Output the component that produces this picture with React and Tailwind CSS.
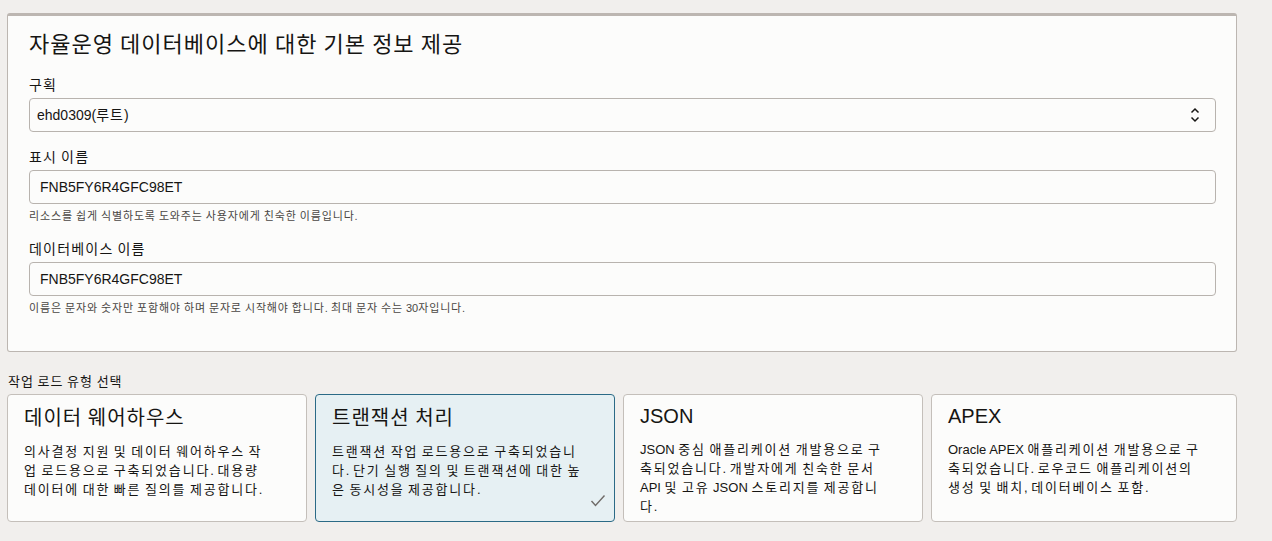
import React from "react";

const font = { fontFamily: '"Liberation Sans", "Noto Sans CJK KR", Arial, sans-serif' };

function K({ t, ls }) {
  const parts = t.split(/([가-힣]+)/);
  return (
    <>
      {parts.map((p, i) =>
        /[가-힣]/.test(p) ? (
          <span key={i} className={ls}>
            {p}
          </span>
        ) : (
          <React.Fragment key={i}>{p}</React.Fragment>
        )
      )}
    </>
  );
}

function Field({ label, children, help }) {
  return (
    <div className="mt-[15px]">
      <div className="text-[14px] leading-[20px] text-[#161513]">
        <K t={label} ls="tracking-[1.2px]" />
      </div>
      <div className="mt-[3px]">{children}</div>
      {help && (
        <div className="mt-[4px] text-[11px] leading-[16px] text-[#4a4744]">
          <K t={help} ls="tracking-[0.85px]" />
        </div>
      )}
    </div>
  );
}

function Input({ value, select }) {
  return (
    <div
      className={
        "h-[34px] rounded-[4px] border border-[#b8b3ae] bg-[#fcfcfb] flex items-center justify-between pr-[14px] text-[14px] text-[#161513] " +
        (select ? "pl-[7px]" : "pl-[10px]")
      }
    >
      <span>
        <K t={value} ls="tracking-[1px]" />
      </span>
      {select && (
        <svg width="12" height="16" viewBox="0 0 12 16" fill="none" stroke="#161513" strokeWidth="1.5">
          <path d="M2.5 5.5 L6 2 L9.5 5.5" />
          <path d="M2.5 10.5 L6 14 L9.5 10.5" />
        </svg>
      )}
    </div>
  );
}

function Card({ title, desc, selected, latin }) {
  return (
    <div
      className={
        "relative h-[128px] rounded-[4px] border pl-[16px] pr-[31px] " +
        (latin ? "pt-[7px] " : "pt-[9px] ") +
        (selected ? "border-[#2b6a86] bg-[#e6f0f3]" : "border-[#c4bfba] bg-[#fcfcfb]")
      }
    >
      <div className="text-[20px] leading-[28px] text-[#161513]">
        <K t={title} ls="tracking-[1px]" />
      </div>
      <div className="mt-[10px] text-[13px] leading-[19px] text-[#161513]">
        <K t={desc} ls="tracking-[1.8px]" />
      </div>
      {selected && (
        <svg className="absolute right-[8px] bottom-[13px]" width="16" height="14" viewBox="0 0 16 14" fill="none" stroke="#6f6b68" strokeWidth="1.4">
          <path d="M1.5 7 L5.5 11.5 L14.5 1.5" />
        </svg>
      )}
    </div>
  );
}

export default function App() {
  return (
    <div className="min-h-[541px] bg-[#f1efed] pt-[13px] pl-[7px] pr-[35px]" style={font}>
      <div className="rounded-[3px] border border-t-[3px] border-[#bcb6b1] bg-[#fcfcfb] pl-[21px] pr-[20px] pt-[14px] pb-[35px]">
        <div className="text-[22px] leading-[30px] text-[#161513]">
          <K t="자율운영 데이터베이스에 대한 기본 정보 제공" ls="tracking-[1px]" />
        </div>
        <Field label="구획">
          <Input value="ehd0309(루트)" select />
        </Field>
        <Field label="표시 이름" help="리소스를 쉽게 식별하도록 도와주는 사용자에게 친숙한 이름입니다.">
          <Input value="FNB5FY6R4GFC98ET" />
        </Field>
        <Field label="데이터베이스 이름" help="이름은 문자와 숫자만 포함해야 하며 문자로 시작해야 합니다. 최대 문자 수는 30자입니다.">
          <Input value="FNB5FY6R4GFC98ET" />
        </Field>
      </div>
      <div className="mt-[20px] text-[13px] leading-[20px] text-[#161513] pl-[1px]">
        <K t="작업 로드 유형 선택" ls="tracking-[1px]" />
      </div>
      <div className="mt-[2px] grid grid-cols-[300px_300px_300px_1fr] gap-[8px]">
        <Card title="데이터 웨어하우스" desc="의사결정 지원 및 데이터 웨어하우스 작업 로드용으로 구축되었습니다. 대용량 데이터에 대한 빠른 질의를 제공합니다." />
        <Card selected title="트랜잭션 처리" desc="트랜잭션 작업 로드용으로 구축되었습니다. 단기 실행 질의 및 트랜잭션에 대한 높은 동시성을 제공합니다." />
        <Card latin title="JSON" desc="JSON 중심 애플리케이션 개발용으로 구축되었습니다. 개발자에게 친숙한 문서 API 및 고유 JSON 스토리지를 제공합니다." />
        <Card latin title="APEX" desc="Oracle APEX 애플리케이션 개발용으로 구축되었습니다. 로우코드 애플리케이션의 생성 및 배치, 데이터베이스 포함." />
      </div>
    </div>
  );
}
